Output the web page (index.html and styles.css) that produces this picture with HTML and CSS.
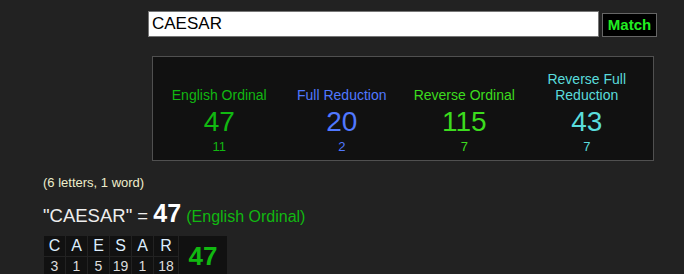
FILE: index.html
```html
<!DOCTYPE html>
<html>
<head>
<meta charset="utf-8">
<link rel="stylesheet" href="styles.css">
</head>
<body>
<div class="page">
  <form class="search">
    <input class="search-input" type="text" value="CAESAR">
    <button class="match-btn" type="button">Match</button>
  </form>
  <div class="results">
    <div class="col eo">
      <div class="label">English Ordinal</div>
      <div class="num">47</div>
      <div class="sub">11</div>
    </div>
    <div class="col fr">
      <div class="label">Full Reduction</div>
      <div class="num">20</div>
      <div class="sub">2</div>
    </div>
    <div class="col ro">
      <div class="label">Reverse Ordinal</div>
      <div class="num">115</div>
      <div class="sub">7</div>
    </div>
    <div class="col rfr">
      <div class="label">Reverse Full<br>Reduction</div>
      <div class="num">43</div>
      <div class="sub">7</div>
    </div>
  </div>
  <div class="count">(6 letters, 1 word)</div>
  <div class="equation"><span class="phrase">"CAESAR" = </span><span class="total">47</span> <span class="cipher">(English Ordinal)</span></div>
  <table class="breakdown">
    <tr class="letters">
      <td>C</td><td>A</td><td>E</td><td>S</td><td>A</td><td class="wide">R</td>
      <td class="sum" rowspan="2">47</td>
    </tr>
    <tr class="values">
      <td>3</td><td>1</td><td>5</td><td>19</td><td>1</td><td class="wide">18</td>
    </tr>
  </table>
</div>
</body>
</html>
```
FILE: styles.css
```css
html, body {
  margin: 0;
  padding: 0;
  background: #222222;
  font-family: "Liberation Sans", Arial, sans-serif;
}

.page {
  padding-left: 43px;
  width: 641px;
  height: 274px;
  overflow: hidden;
}

.search {
  display: flex;
  align-items: center;
  gap: 3px;
  margin: 0 0 0 105px;
  padding-top: 11px;
}

.search-input {
  box-sizing: border-box;
  width: 451px;
  height: 26px;
  margin: 0;
  padding: 0 3px;
  border: 1px solid #767676;
  background: #ffffff;
  color: #000000;
  font-family: "Liberation Sans", Arial, sans-serif;
  font-size: 17px;
  outline: none;
}

.match-btn {
  box-sizing: border-box;
  width: 55px;
  height: 24px;
  margin: 1px 0 0 0;
  padding: 0;
  border: 1px solid #666666;
  background: #000000;
  color: #22ee22;
  font-family: "Liberation Sans", Arial, sans-serif;
  font-weight: bold;
  font-size: 15px;
}

.results {
  box-sizing: border-box;
  display: flex;
  align-items: flex-end;
  width: 502px;
  height: 105px;
  margin: 19px 0 0 109px;
  padding: 0 5px 5px 5px;
  border: 1px solid #505050;
  background: #111111;
}

.col {
  flex: 1 1 0;
  display: flex;
  flex-direction: column;
  align-items: center;
  text-align: center;
}

.label {
  font-size: 14px;
  line-height: 16px;
}

.num {
  font-size: 28px;
  line-height: 32px;
  margin-top: 3px;
}

.sub {
  font-size: 13px;
  line-height: 16px;
  margin-top: 1px;
}

.eo { color: #11b811; }
.fr { color: #5078ff; }
.ro { color: #3cdc1e; }
.rfr { color: #5adcdc; }

.count {
  margin-top: 14px;
  font-size: 13px;
  line-height: 16px;
  color: #eeeecc;
}

.equation {
  height: 29px;
  margin-top: 9px;
  line-height: 26px;
  font-size: 18.5px;
  color: #eeeeee;
  white-space: nowrap;
}

.total {
  font-size: 25px;
  font-weight: bold;
  color: #ffffff;
}

.cipher {
  font-size: 16px;
  color: #11b811;
}

.breakdown {
  margin-top: 6px;
  margin-left: 0;
  border-collapse: separate;
  border-spacing: 1px;
}

.breakdown td {
  background: #111111;
  text-align: center;
  padding: 0;
  width: 21px;
}

.breakdown td.wide {
  width: 24px;
}

.letters td {
  height: 20px;
  font-size: 16px;
  line-height: 20px;
  color: #ddeeff;
}

.values td {
  height: 19px;
  font-size: 14px;
  line-height: 19px;
  color: #dddddd;
}

.breakdown td.sum {
  width: 48px;
  font-size: 26px;
  font-weight: bold;
  color: #11b811;
}
```
